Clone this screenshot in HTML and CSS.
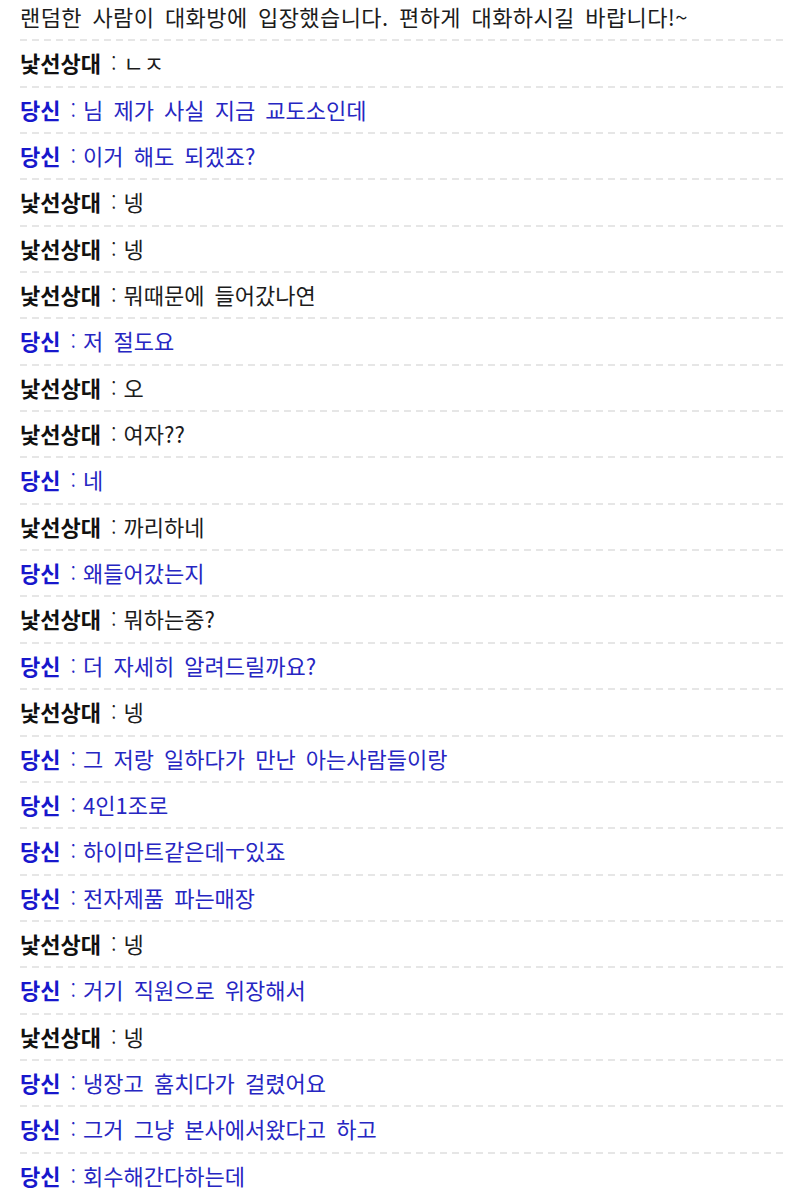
FILE: index.html
```html
<!DOCTYPE html>
<html lang="ko">
<head>
    <meta charset="UTF-8">
    <meta name="viewport" content="width=device-width, initial-scale=1.0">
    <title>랜덤채팅</title>
    <link rel="stylesheet" href="styles.css">
</head>
<body>
    <div class="chat">
        <div class="line notice">랜덤한 사람이 대화방에 입장했습니다. 편하게 대화하시길 바랍니다!~</div>
        <div class="line other"><b>낯선상대</b><span class="colon">:</span>ㄴㅈ</div>
        <div class="line me"><b>당신</b><span class="colon">:</span>님 제가 사실 지금 교도소인데</div>
        <div class="line me"><b>당신</b><span class="colon">:</span>이거 해도 되겠죠?</div>
        <div class="line other"><b>낯선상대</b><span class="colon">:</span>넹</div>
        <div class="line other"><b>낯선상대</b><span class="colon">:</span>넹</div>
        <div class="line other"><b>낯선상대</b><span class="colon">:</span>뭐때문에 들어갔나연</div>
        <div class="line me"><b>당신</b><span class="colon">:</span>저 절도요</div>
        <div class="line other"><b>낯선상대</b><span class="colon">:</span>오</div>
        <div class="line other"><b>낯선상대</b><span class="colon">:</span>여자??</div>
        <div class="line me"><b>당신</b><span class="colon">:</span>네</div>
        <div class="line other"><b>낯선상대</b><span class="colon">:</span>까리하네</div>
        <div class="line me"><b>당신</b><span class="colon">:</span>왜들어갔는지</div>
        <div class="line other"><b>낯선상대</b><span class="colon">:</span>뭐하는중?</div>
        <div class="line me"><b>당신</b><span class="colon">:</span>더 자세히 알려드릴까요?</div>
        <div class="line other"><b>낯선상대</b><span class="colon">:</span>넹</div>
        <div class="line me"><b>당신</b><span class="colon">:</span>그 저랑 일하다가 만난 아는사람들이랑</div>
        <div class="line me"><b>당신</b><span class="colon">:</span>4인1조로</div>
        <div class="line me"><b>당신</b><span class="colon">:</span>하이마트같은데ㅜ있죠</div>
        <div class="line me"><b>당신</b><span class="colon">:</span>전자제품 파는매장</div>
        <div class="line other"><b>낯선상대</b><span class="colon">:</span>넹</div>
        <div class="line me"><b>당신</b><span class="colon">:</span>거기 직원으로 위장해서</div>
        <div class="line other"><b>낯선상대</b><span class="colon">:</span>넹</div>
        <div class="line me"><b>당신</b><span class="colon">:</span>냉장고 훔치다가 걸렸어요</div>
        <div class="line me"><b>당신</b><span class="colon">:</span>그거 그냥 본사에서왔다고 하고</div>
        <div class="line me"><b>당신</b><span class="colon">:</span>회수해간다하는데</div>
    </div>
</body>
</html>
```

FILE: styles.css
```css
html, body {
    padding: 0;
    margin: 0;
    background: #fff;
}
.chat {
    padding: 0 17px 0 20px;
    font-family: "Noto Sans CJK KR", "Noto Sans", sans-serif;
    font-size: 22px;
    word-spacing: 4px;
    color: #1c1c1c;
}
.line {
    padding: 5px 0 10.35px;
    line-height: 30px;
    white-space: nowrap;
    border-bottom: 1px solid transparent;
    background: repeating-linear-gradient(to right, #e6e6e6 0 7px, transparent 7px 12px) left bottom / 100% 2px no-repeat;
}
.line:first-child {
    padding-top: 1px;
}
.notice {
    letter-spacing: 0.4px;
}
.line b {
    font-weight: 700;
}
.colon {
    margin: 0 7px 0 10px;
    font-weight: 300;
}
.other b {
    color: #111;
}
.me {
    color: #2626c2;
}
.me b {
    color: #1717cc;
}
```
